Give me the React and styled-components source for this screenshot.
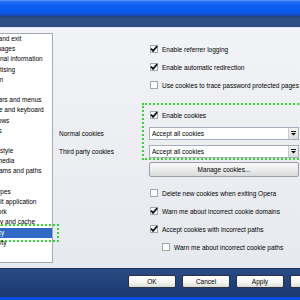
import React from "react";
import styled, { createGlobalStyle } from "styled-components";

const GlobalStyle = createGlobalStyle`
  html, body {
    margin: 0;
    padding: 0;
    width: 300px;
    height: 300px;
    overflow: hidden;
    background: #0b4fe0;
  }
  body {
    font-family: "Liberation Sans", Arial, sans-serif;
    font-size: 6.5px;
    color: #000;
  }
`;

const categories = [
  "Start and exit",
  "Languages",
  "Personal information",
  "Advertising",
  "Plug-in",
  "Mail",
  "Toolbars and menus",
  "Mouse and keyboard",
  "Windows",
  "Colors",
  "Fonts",
  "Page style",
  "Multimedia",
  "Programs and paths",
  "Java",
  "File types",
  "Default application",
  "Network",
  "History and cache",
  "Privacy",
  "Security",
];

const Check = () => (
  <svg width="8" height="8" viewBox="0 0 8 8">
    <path d="M1 3.6 L3.1 5.9 L7.2 1.1" fill="none" stroke="#111" strokeWidth="1.7" />
  </svg>
);

const Arrow = () => (
  <svg width="5" height="5" viewBox="0 0 5 5">
    <rect x="0" y="0" width="5" height="1" fill="#111" />
    <path d="M0 2 L5 2 L2.5 4.6 Z" fill="#111" />
  </svg>
);

const Option = ({ checked, indent, children }) => (
  <CheckRow $indent={indent}>
    <Box>{checked && <Check />}</Box>
    <span>{children}</span>
  </CheckRow>
);

const Select = ({ value }) => (
  <Dropdown>
    <span>{value}</span>
    <DropButton>
      <Arrow />
    </DropButton>
  </Dropdown>
);

const App = () => {
  return (
    <>
      <GlobalStyle />
      <Window>
        <TitleBar />
        <HeaderStrip />
        <Panel>
          <CategoryList>
            {categories.map((c) => (
              <Category key={c} $selected={c === "Privacy"}>
                {c}
              </Category>
            ))}
          </CategoryList>
          <Settings>
            <Option checked>Enable referrer logging</Option>
            <Option checked>Enable automatic redirection</Option>
            <Option>Use cookies to trace password protected pages</Option>
            <CookieLabels>
              <FieldLabel>Normal cookies</FieldLabel>
              <FieldLabel>Third party cookies</FieldLabel>
            </CookieLabels>
            <CookieGroup>
              <Option checked>Enable cookies</Option>
              <Select value="Accept all cookies" />
              <Select value="Accept all cookies" />
            </CookieGroup>
            <ManageButton>Manage cookies...</ManageButton>
            <Spacer />
            <Option>Delete new cookies when exiting Opera</Option>
            <Option checked>Warn me about incorrect cookie domains</Option>
            <Option checked>Accept cookies with incorrect paths</Option>
            <Option indent>Warn me about incorrect cookie paths</Option>
          </Settings>
        </Panel>
        <Footer>
          <DialogButton>OK</DialogButton>
          <DialogButton>Cancel</DialogButton>
          <DialogButton>Apply</DialogButton>
          <DialogButton>Help</DialogButton>
        </Footer>
        <FrameBottom />
      </Window>
    </>
  );
};

const Window = styled.div`
  display: flex;
  flex-direction: column;
  width: 340px;
  height: 300px;
  margin-left: -24px;
`;

const TitleBar = styled.div`
  height: 16px;
  background: linear-gradient(
    #78a8f6 0,
    #2a74f4 1px,
    #0e60f2 5px,
    #0a58ea 13px,
    #1b4db0 15px,
    #1b4db0 16px
  );
`;

const HeaderStrip = styled.div`
  height: 11px;
  background: linear-gradient(#23437c, #2e4e86 3px, #2c4b82);
`;

const Panel = styled.div`
  display: flex;
  gap: 6px;
  height: 241px;
  box-sizing: border-box;
  padding: 5px 0 0 4px;
  background: linear-gradient(#f2f3f6, #e6e9ee);
  border-top: 1px solid #dfe3ea;
`;

const CategoryList = styled.div`
  width: 73px;
  height: 230px;
  box-sizing: border-box;
  border: 1px solid #a4abb6;
  background: #fff;
  flex-shrink: 0;
`;

const Category = styled.div`
  position: relative;
  height: 10.2px;
  line-height: 10.2px;
  padding-left: 2px;
  white-space: nowrap;
  background: ${(p) => (p.$selected ? "#316ac5" : "transparent")};
  color: ${(p) => (p.$selected ? "#fff" : "#000")};
  &::after {
    content: "";
    display: ${(p) => (p.$selected ? "block" : "none")};
    position: absolute;
    top: -4px;
    left: -4px;
    right: -7px;
    bottom: -4px;
    border: 2px dotted #35d735;
  }
`;

const Settings = styled.div`
  display: grid;
  grid-template-columns: 90px 150px;
  align-content: start;
  padding-top: 7px;
`;

const CheckRow = styled.div`
  grid-column: 2;
  display: flex;
  align-items: center;
  gap: 4px;
  height: 18px;
  padding-left: ${(p) => (p.$indent ? "13px" : "1px")};
  white-space: nowrap;
`;

const Box = styled.div`
  width: 8px;
  height: 8px;
  box-sizing: border-box;
  border: 1px solid #a3a8b0;
  background: #fff;
  display: flex;
  align-items: center;
  justify-content: center;
  flex-shrink: 0;
  svg {
    margin: -1px;
  }
`;

const CookieLabels = styled.div`
  grid-column: 1;
  display: flex;
  flex-direction: column;
  gap: 5px;
  margin-top: 33px;
`;

const FieldLabel = styled.div`
  height: 13px;
  line-height: 13px;
`;

const CookieGroup = styled.div`
  grid-column: 2;
  position: relative;
  display: flex;
  flex-direction: column;
  gap: 5px;
  margin-top: 12px;
  &::after {
    content: "";
    position: absolute;
    top: -3px;
    left: -7px;
    right: -20px;
    bottom: -2px;
    border: 2px dotted #35d735;
  }
  & > div:first-child {
    margin-bottom: -2px;
  }
`;

const Dropdown = styled.div`
  display: flex;
  align-items: center;
  justify-content: space-between;
  height: 13px;
  box-sizing: border-box;
  border: 1px solid #a6aebb;
  background: #fff;
  padding-left: 2px;
`;

const DropButton = styled.div`
  width: 9px;
  height: 11px;
  display: flex;
  align-items: center;
  justify-content: center;
  background: linear-gradient(#f4f4f4, #dedede);
  border-left: 1px solid #c8ccd2;
`;

const ManageButton = styled.div`
  grid-column: 2;
  margin-top: 4px;
  height: 15px;
  line-height: 13px;
  box-sizing: border-box;
  border: 1px solid #9b9ea3;
  border-radius: 2px;
  background: linear-gradient(#fafafa, #e9e9e9 60%, #d9dadc);
  text-align: center;
`;

const Spacer = styled.div`
  grid-column: 1 / 3;
  height: 7px;
`;

const Footer = styled.div`
  display: flex;
  gap: 6px;
  height: 29px;
  box-sizing: border-box;
  padding: 6px 0 0 152px;
  background: linear-gradient(#2b4b84, #21417a 50%, #1d3a71);
  border-top: 1px solid #1a2f5c;
`;

const DialogButton = styled.div`
  width: 48px;
  height: 13px;
  flex-shrink: 0;
  box-sizing: border-box;
  border: 1px solid #2c3444;
  border-radius: 2px;
  background: linear-gradient(#ffffff, #f3f3f1 60%, #dcdcd6);
  line-height: 11px;
  text-align: center;
`;

const FrameBottom = styled.div`
  height: 3px;
  background: #0b4fe0;
`;

export default App;
